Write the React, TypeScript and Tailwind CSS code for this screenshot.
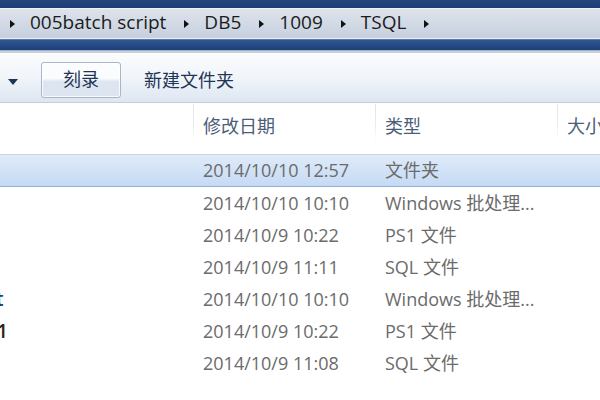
import React from "react";

type Row = {
  name: string;
  nameClass: string;
  date: string;
  type: string;
  selected?: boolean;
};

const rows: Row[] = [
  { name: "", nameClass: "", date: "2014/10/10 12:57", type: "文件夹", selected: true },
  { name: "", nameClass: "", date: "2014/10/10 10:10", type: "Windows 批处理..." },
  { name: "", nameClass: "", date: "2014/10/9 10:22", type: "PS1 文件" },
  { name: "", nameClass: "", date: "2014/10/9 11:11", type: "SQL 文件" },
  { name: "t", nameClass: "-ml-[4px] text-[#1c3d78] font-semibold", date: "2014/10/10 10:10", type: "Windows 批处理..." },
  { name: "1", nameClass: "-ml-[3px] text-[#2a2118] font-semibold", date: "2014/10/9 10:22", type: "PS1 文件" },
  { name: "", nameClass: "", date: "2014/10/9 11:08", type: "SQL 文件" },
];

const crumbs = ["005batch script", "DB5", "1009", "TSQL"];

function Arrow() {
  return (
    <svg width="7" height="10" viewBox="0 0 7 10" className="shrink-0">
      <path d="M1 1 L6 5 L1 9 Z" fill="#111" />
    </svg>
  );
}

function HeaderCell({ label, sep = true }: { label?: string; sep?: boolean }) {
  return (
    <div className="flex h-full items-stretch">
      {sep && <div className="w-px mt-px mb-[12px] bg-gradient-to-b from-[#dfe5ee] via-[#e6ebf2] to-transparent" />}
      {label && (
        <span className="self-center pl-[9px] pb-[4px] text-[18px] text-[#4c5d77] whitespace-nowrap">{label}</span>
      )}
    </div>
  );
}

export default function App() {
  return (
    <div className="w-[600px] h-[400px] overflow-hidden bg-white font-['Open_Sans','Noto_Sans_CJK_SC',sans-serif]">
      {/* window title strip */}
      <div className="h-[8px] bg-gradient-to-b from-[#24467f] to-[#1d3c72]" />

      {/* address bar */}
      <div className="h-[30px] flex items-center gap-[14px] pl-[9px] bg-gradient-to-b from-[#dde3ec] to-[#c6d0de] border-t border-[#eef2f7]">
        {crumbs.map((c) => (
          <React.Fragment key={c}>
            <Arrow />
            <span className="mr-[3px] text-[19px] text-[#1b1b1b] leading-none pb-[2px] whitespace-nowrap">{c}</span>
          </React.Fragment>
        ))}
        <Arrow />
      </div>

      {/* blue band */}
      <div className="h-px bg-[#e9eef5]" />
      <div className="h-px bg-[#5d7aa8]" />
      <div className="h-[10px] bg-gradient-to-b from-[#2f5894] to-[#1f3f78]" />
      <div className="h-px bg-[#9fb1cc]" />
      <div className="h-[2px] bg-[#c9cfd8]" />

      {/* command bar */}
      <div className="h-[50px] flex items-start bg-gradient-to-b from-[#fbfcfe] via-[#f1f5fa] to-[#dde6f2] border-b border-[#c3cedc]">
        <svg width="10" height="6" viewBox="0 0 10 6" className="ml-[8px] mt-[26px] shrink-0">
          <path d="M0 0 H10 L5 6 Z" fill="#1e3456" />
        </svg>
        <div className="ml-[23px] mt-[9px] w-[80px] h-[36px] rounded-[3px] border border-[#aab6c7] bg-gradient-to-b from-[#fbfcfe] from-45% to-[#dce5f0] to-55% flex items-center justify-center shadow-[inset_0_0_0_1px_rgba(255,255,255,0.8)]">
          <span className="text-[18px] text-[#1e3556] pb-[2px]">刻录</span>
        </div>
        <span className="ml-[23px] mt-[14px] text-[18px] text-[#1e3556]">新建文件夹</span>
      </div>

      {/* column header */}
      <div className="h-[52px] grid grid-cols-[193px_182px_182px_1fr] border-b border-[#c8d6e6]">
        <HeaderCell sep={false} />
        <HeaderCell label="修改日期" />
        <HeaderCell label="类型" />
        <HeaderCell label="大小" />
      </div>

      {/* rows */}
      <div className="flex flex-col">
        {rows.map((r, i) => (
          <div
            key={i}
            className={
              r.selected
                ? "h-[32px] grid grid-cols-[193px_182px_182px_1fr] items-center bg-gradient-to-b from-[#dfebfa] to-[#c5daf4] border-b border-[#8eb0da]"
                : "h-[32px] grid grid-cols-[193px_182px_182px_1fr] items-center"
            }
          >
            <div className="overflow-hidden whitespace-nowrap text-[19px] leading-none">
              <span className={r.nameClass}>{r.name}</span>
            </div>
            <span className="pl-[10px] text-[18px] text-[#6b6b6b] whitespace-nowrap">{r.date}</span>
            <span className="pl-[10px] text-[18px] text-[#6b6b6b] whitespace-nowrap">{r.type}</span>
            <span />
          </div>
        ))}
      </div>
    </div>
  );
}
